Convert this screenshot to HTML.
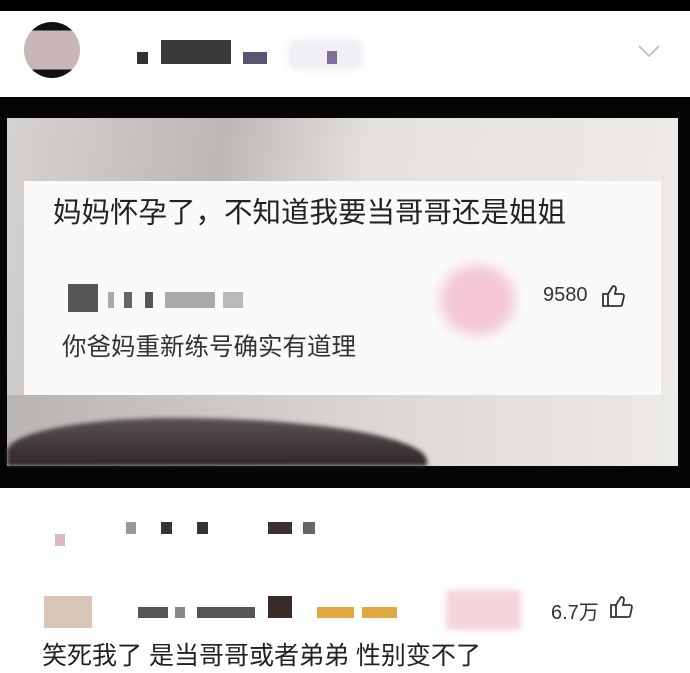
<!DOCTYPE html>
<html><head><meta charset="utf-8"><style>
*{margin:0;padding:0;box-sizing:border-box}
body{width:690px;height:673px;background:#fff;position:relative;overflow:hidden;font-family:"Liberation Sans","Noto Sans CJK SC",sans-serif;color:#222}
.a{position:absolute}
.b{position:absolute;background:#333}
</style></head><body>
<div class="a" style="left:0;top:0;width:690px;height:11px;background:#000"></div>
<div class="a" style="left:24px;top:22px;width:56px;height:56px;border-radius:50%;background:linear-gradient(180deg,#111 0 15%,#c9b7b8 15% 85%,#111 85%)"></div>
<div class="b" style="left:137px;top:52px;width:11px;height:12px"></div>
<div class="b" style="left:161px;top:40px;width:70px;height:24px;background:#3a3a3a"></div>
<div class="a" style="left:243px;top:52px;width:24px;height:12px;background:#5a5470"></div>
<div class="a" style="left:288px;top:40px;width:75px;height:30px;background:#f1eef5;border-radius:8px;filter:blur(3px)"></div>
<div class="a" style="left:327px;top:51px;width:10px;height:13px;background:#7a709a"></div>
<svg class="a" style="left:637px;top:44px" width="24" height="14"><path d="M2 2 L12 12 L22 2" fill="none" stroke="#bbb" stroke-width="1.6"/></svg>
<div class="a" style="left:0;top:97px;width:690px;height:391px;background:#050505"></div>
<div class="a" style="left:7px;top:118px;width:671px;height:348px;background:linear-gradient(100deg,#d6d2d0 0%,#bdb8b6 30%,#e4e0dc 50%,#efece8 100%)"></div>
<div class="a" style="left:7px;top:395px;width:671px;height:71px;background:linear-gradient(90deg,#b8b4b2,#dedad6 60%,#eceae6)"></div>
<div class="a" style="left:7px;top:418px;width:420px;height:48px;background:linear-gradient(180deg,#5a5254,#2e2628);border-radius:40% 60% 0 0/70% 90% 0 0;filter:blur(2px)"></div>
<div class="a" style="left:24px;top:181px;width:637px;height:214px;background:#fbfafb"></div>
<div class="a" style="left:440px;top:265px;width:75px;height:70px;background:#f4c6d6;border-radius:50%;filter:blur(6px)"></div>
<div class="a" style="left:53px;top:195px;font-size:28.5px;line-height:36px;color:#222;white-space:nowrap">妈妈怀孕了，不知道我要当哥哥还是姐姐</div>
<div class="b" style="left:68px;top:284px;width:30px;height:28px;background:#555"></div>
<div class="b" style="left:108px;top:292px;width:6px;height:16px;background:#aaa"></div>
<div class="b" style="left:124px;top:292px;width:8px;height:16px;background:#666"></div>
<div class="b" style="left:145px;top:292px;width:8px;height:16px;background:#555"></div>
<div class="b" style="left:165px;top:292px;width:50px;height:16px;background:#aaa"></div>
<div class="b" style="left:223px;top:292px;width:20px;height:16px;background:#bbb"></div>
<div class="a" style="left:543px;top:284px;font-size:20px;color:#333">9580</div>
<svg class="a" style="left:600px;top:283px" width="26" height="26"><path d="M3 11h5v12H3zM8 11l5-8c2 0 3 1 3 3l-1 5h7c1 0 2 1 2 2l-2 9c0 1-1 1-2 1H8" fill="none" stroke="#333" stroke-width="1.8"/></svg>
<div class="a" style="left:62px;top:332px;font-size:24.5px;line-height:32px;color:#333;white-space:nowrap">你爸妈重新练号确实有道理</div>
<div class="a" style="left:55px;top:534px;width:10px;height:12px;background:#e0b8c0"></div>
<div class="b" style="left:126px;top:522px;width:10px;height:12px;background:#999"></div>
<div class="b" style="left:161px;top:522px;width:11px;height:12px"></div>
<div class="b" style="left:197px;top:522px;width:11px;height:12px"></div>
<div class="b" style="left:268px;top:522px;width:24px;height:12px;background:#3c3234"></div>
<div class="b" style="left:303px;top:522px;width:12px;height:12px;background:#666"></div>
<div class="a" style="left:44px;top:596px;width:48px;height:32px;background:#d8c4b8"></div>
<div class="b" style="left:138px;top:607px;width:30px;height:11px;background:#555"></div>
<div class="b" style="left:175px;top:607px;width:10px;height:11px;background:#888"></div>
<div class="b" style="left:197px;top:607px;width:58px;height:11px;background:#555"></div>
<div class="b" style="left:268px;top:596px;width:24px;height:22px;background:#3a2a28"></div>
<div class="a" style="left:317px;top:607px;width:37px;height:11px;background:#e0a840"></div>
<div class="a" style="left:362px;top:607px;width:35px;height:11px;background:#e0a840"></div>
<div class="a" style="left:446px;top:590px;width:75px;height:40px;background:#f6d4dc;filter:blur(3px)"></div>
<div class="a" style="left:551px;top:596px;font-size:20px;color:#333">6.7万</div>
<svg class="a" style="left:608px;top:594px" width="26" height="26"><path d="M3 11h5v12H3zM8 11l5-8c2 0 3 1 3 3l-1 5h7c1 0 2 1 2 2l-2 9c0 1-1 1-2 1H8" fill="none" stroke="#333" stroke-width="1.8"/></svg>
<div class="a" style="left:42px;top:640px;font-size:25px;line-height:32px;color:#222;white-space:nowrap">笑死我了 是当哥哥或者弟弟 性别变不了</div>
</body></html>
